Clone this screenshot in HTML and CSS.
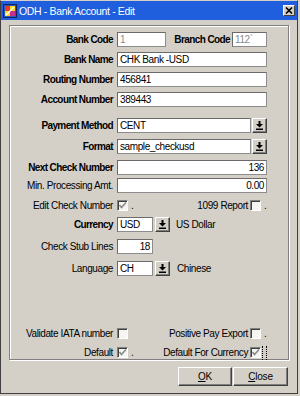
FILE: index.html
```html
<!DOCTYPE html>
<html>
<head>
<meta charset="utf-8">
<link rel="stylesheet" href="styles.css">
</head>
<body>
<div class="window">
  <div class="titlebar">
    <svg class="app-icon" width="14" height="14" viewBox="0 0 14 14">
      <rect x="0.5" y="0.5" width="13" height="13" fill="#2a58b8" stroke="#102060"/>
      <rect x="2" y="2" width="5" height="5" fill="#e83828"/>
      <rect x="7" y="2" width="5" height="5" fill="#f8d820"/>
      <rect x="2" y="7" width="5" height="5" fill="#f8d820"/>
      <rect x="7" y="7" width="5" height="5" fill="#c83090"/>
      <path d="M3 11 L11 3" stroke="#fff" stroke-width="1.2"/>
    </svg>
    <span class="title">ODH - Bank Account - Edit</span>
    <span class="close-btn">
      <svg width="8" height="7" viewBox="0 0 8 7"><path d="M1 0.5 L7 6.5 M7 0.5 L1 6.5" stroke="#000" stroke-width="1.6"/></svg>
    </span>
  </div>
  <div class="client">
    <div class="panel">
      <div class="row">
        <span class="lbl b">Bank Code</span>
        <span class="field w-code dim">1</span>
        <span class="lbl-r b">Branch Code</span>
        <span class="field w-branch dim">112`</span>
      </div>
      <div class="row gap-5">
        <span class="lbl b">Bank Name</span>
        <span class="field w-full">CHK Bank -USD</span>
      </div>
      <div class="row gap-5">
        <span class="lbl b">Routing Number</span>
        <span class="field w-full">456841</span>
      </div>
      <div class="row gap-5">
        <span class="lbl b">Account Number</span>
        <span class="field w-full">389443</span>
      </div>
      <div class="row gap-11">
        <span class="lbl b">Payment Method</span>
        <span class="field w-combo">CENT</span>
        <span class="dd"><svg width="7" height="9" viewBox="0 0 7 9"><path d="M2.5 0h2v3h2.5l-3.5 3.5l-3.5-3.5h2.5z M0 7.5h7v1.5h-7z" fill="#000"/></svg></span>
      </div>
      <div class="row gap-6">
        <span class="lbl b">Format</span>
        <span class="field w-combo">sample_checkusd</span>
        <span class="dd"><svg width="7" height="9" viewBox="0 0 7 9"><path d="M2.5 0h2v3h2.5l-3.5 3.5l-3.5-3.5h2.5z M0 7.5h7v1.5h-7z" fill="#000"/></svg></span>
      </div>
      <div class="row gap-6">
        <span class="lbl b">Next Check Number</span>
        <span class="field w-full num">136</span>
      </div>
      <div class="row gap-3">
        <span class="lbl">Min. Processing Amt.</span>
        <span class="field w-full num">0.00</span>
      </div>
      <div class="row gap-5">
        <span class="lbl">Edit Check Number</span>
        <span class="cb"><svg width="9" height="9" viewBox="0 0 9 9"><path d="M1.5 4 L3.5 6.5 L8 1.5" fill="none" stroke="#8a8a8a" stroke-width="1.6"/></svg></span>
        <span class="dot">.</span>
        <span class="lbl-r">1099 Report</span>
        <span class="cb"></span>
        <span class="dot">.</span>
      </div>
      <div class="row gap-4">
        <span class="lbl b">Currency</span>
        <span class="field w-short">USD</span>
        <span class="dd dd-gap"><svg width="7" height="9" viewBox="0 0 7 9"><path d="M2.5 0h2v3h2.5l-3.5 3.5l-3.5-3.5h2.5z M0 7.5h7v1.5h-7z" fill="#000"/></svg></span>
        <span class="desc">US Dollar</span>
      </div>
      <div class="row gap-7">
        <span class="lbl">Check Stub Lines</span>
        <span class="field w-short num">18</span>
      </div>
      <div class="row gap-7">
        <span class="lbl">Language</span>
        <span class="field w-short">CH</span>
        <span class="dd dd-gap"><svg width="7" height="9" viewBox="0 0 7 9"><path d="M2.5 0h2v3h2.5l-3.5 3.5l-3.5-3.5h2.5z M0 7.5h7v1.5h-7z" fill="#000"/></svg></span>
        <span class="desc desc-lang">Chinese</span>
      </div>
      <div class="row gap-50">
        <span class="lbl">Validate IATA number</span>
        <span class="cb"></span>
        <span class="lbl-r">Positive Pay Export</span>
        <span class="cb"></span>
        <span class="dot">.</span>
      </div>
      <div class="row gap-4">
        <span class="lbl">Default</span>
        <span class="cb"><svg width="9" height="9" viewBox="0 0 9 9"><path d="M1.5 4 L3.5 6.5 L8 1.5" fill="none" stroke="#8a8a8a" stroke-width="1.6"/></svg></span>
        <span class="dot">.</span>
        <span class="lbl-r">Default For Currency</span>
        <span class="cb"><svg width="9" height="9" viewBox="0 0 9 9"><path d="M1.5 4 L3.5 6.5 L8 1.5" fill="none" stroke="#8a8a8a" stroke-width="1.6"/></svg></span>
        <span class="focus"></span>
      </div>
    </div>
    <div class="buttons">
      <span class="btn btn-ok"><u>O</u>K</span>
      <span class="btn btn-close"><u>C</u>lose</span>
    </div>
  </div>
</div>
</body>
</html>
```
FILE: styles.css
```css
html, body {
  margin: 0;
  padding: 0;
}
body {
  background: #d4d0c8;
  font-family: "Liberation Sans", Arial, sans-serif;
  font-size: 10px;
  letter-spacing: -0.4px;
  color: #000;
}
.window {
  width: 298px;
  height: 394px;
  box-sizing: border-box;
  border: 1px solid #404040;
  border-top-color: #d4d0c8;
  background: #d4d0c8;
  display: flex;
  flex-direction: column;
}
.titlebar {
  height: 19px;
  flex: none;
  background: #1f5edc;
  display: flex;
  align-items: center;
  padding: 0 2px;
  color: #fff;
}
.app-icon {
  flex: none;
  display: block;
}
.title {
  margin-left: 2px;
  font-size: 10.5px;
  letter-spacing: -0.35px;
  white-space: nowrap;
}
.close-btn {
  margin-left: auto;
  width: 12px;
  height: 11px;
  box-sizing: border-box;
  background: #d4d0c8;
  border: 1px solid;
  border-color: #fff #404040 #404040 #fff;
  display: flex;
  align-items: center;
  justify-content: center;
}
.close-btn svg {
  display: block;
}
.client {
  flex: 1;
  padding: 5px 8px 0 8px;
  display: flex;
  flex-direction: column;
}
.panel {
  height: 335px;
  box-sizing: border-box;
  border: 1px solid #808080;
  box-shadow: inset 1px 1px 0 #fff, 1px 1px 0 #fff;
  padding: 6px 21px 0 0;
}
.row {
  display: flex;
  align-items: center;
  height: 15px;
}
.gap-3 { margin-top: 3px; }
.gap-4 { margin-top: 4px; }
.gap-5 { margin-top: 5px; }
.gap-6 { margin-top: 6px; }
.gap-7 { margin-top: 7px; }
.gap-11 { margin-top: 11px; }
.gap-50 { margin-top: 50px; }

.lbl {
  width: 103px;
  flex: none;
  text-align: right;
  margin-right: 4px;
  white-space: nowrap;
}
.lbl-r {
  flex: 1;
  text-align: right;
  margin-right: 2px;
  white-space: nowrap;
}
.b {
  font-weight: bold;
  letter-spacing: -0.6px;
}
.field {
  flex: none;
  height: 15px;
  box-sizing: border-box;
  background: #fff;
  border: 1px solid;
  border-color: #6a6a6a #8c8c8c #8c8c8c #6a6a6a;
  padding: 0 2px;
  line-height: 13px;
  white-space: nowrap;
  overflow: hidden;
}
.dim { color: #8a8a8a; }
.num { text-align: right; }
.w-code { width: 49px; }
.w-branch { width: 35px; }
.w-full { width: 150px; }
.w-combo { width: 134px; }
.w-short { width: 36px; }

.dd {
  flex: none;
  width: 15px;
  height: 15px;
  box-sizing: border-box;
  margin-left: 1px;
  background: #d4d0c8;
  border: 1px solid;
  border-color: #fff #404040 #404040 #fff;
  box-shadow: inset -1px -1px 0 #808080;
  display: flex;
  align-items: center;
  justify-content: center;
}
.dd svg { display: block; }
.dd-gap { margin-left: 2px; }
.desc {
  margin-left: 6px;
  white-space: nowrap;
}
.desc-lang { margin-left: 7px; }

.cb {
  flex: none;
  width: 11px;
  height: 11px;
  box-sizing: border-box;
  background: #f6f5f2;
  border: 1px solid;
  border-color: #808080 #fff #fff #808080;
  box-shadow: inset 1px 1px 0 #404040;
  display: flex;
  align-items: center;
  justify-content: center;
}
.cb svg { display: block; }
.dot {
  flex: none;
  width: 6px;
  box-sizing: border-box;
  padding-left: 3px;
}
.focus {
  flex: none;
  width: 5px;
  height: 14px;
  margin-left: 1px;
  box-sizing: border-box;
  border-left: 1px dotted #000;
  border-right: 1px dotted #000;
}

.buttons {
  display: flex;
  justify-content: flex-end;
  margin-top: 7px;
  padding-right: 1px;
}
.btn {
  height: 19px;
  box-sizing: border-box;
  background: #d4d0c8;
  border: 1px solid;
  border-color: #fff #404040 #404040 #fff;
  box-shadow: inset -1px -1px 0 #808080;
  display: flex;
  align-items: center;
  justify-content: center;
  letter-spacing: -0.2px;
}
.btn-ok { width: 54px; }
.btn-close { width: 55px; margin-left: 1px; }
```
